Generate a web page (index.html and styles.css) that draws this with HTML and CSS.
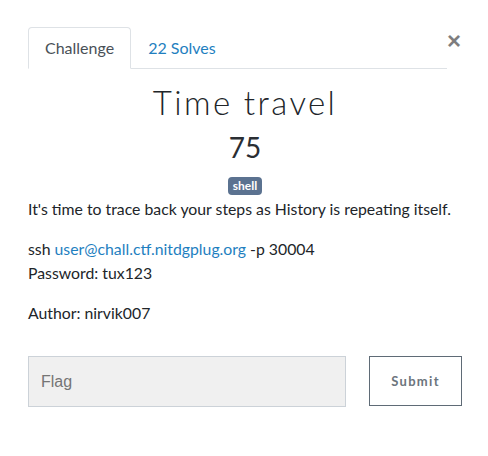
FILE: index.html
```html
<!DOCTYPE html>
<html>
<head>
<meta charset="utf-8">
<link rel="stylesheet" href="styles.css">
</head>
<body>
<div class="modal">
  <div class="head">
    <ul class="tabs">
      <li class="tab active">Challenge</li>
      <li class="tab link">22 Solves</li>
    </ul>
    <span class="close">×</span>
  </div>
  <h3 class="name">Time travel</h3>
  <h4 class="value">75</h4>
  <div class="tags"><span class="badge">shell</span></div>
  <div class="desc">
    <p>It's time to trace back your steps as History is repeating itself.</p>
    <p>ssh <a class="lnk">user@chall.ctf.nitdgplug.org</a> -p 30004<br>Password: tux123</p>
    <p>Author: nirvik007</p>
  </div>
  <div class="submit-row">
    <div class="flag">Flag</div>
    <div class="btn">Submit</div>
  </div>
</div>
</body>
</html>
```

FILE: styles.css
```css
html, body {
  margin: 0;
  background: #fff;
}
body {
  font-family: Lato, "Noto Sans", sans-serif;
  font-size: 16px;
  line-height: 1.5;
  color: #212529;
}
.modal {
  padding: 27px 26px 0 28px;
}
.head {
  display: flex;
  align-items: flex-start;
  padding-right: 1px;
}
.tabs {
  list-style: none;
  margin: 0;
  padding: 0;
  display: flex;
  width: 420px;
  border-bottom: 1px solid #dee2e6;
}
.tab {
  padding: 8px 16px;
  border: 1px solid transparent;
  border-top-left-radius: 4px;
  border-top-right-radius: 4px;
  margin-bottom: -1px;
}
.tab.active {
  color: #495057;
  border-color: #dee2e6 #dee2e6 #fff;
  background: #fff;
}
.tab.link {
  color: #1f7fbf;
}
.close {
  margin-left: auto;
  margin-top: 2px;
  font-size: 24px;
  font-weight: 700;
  line-height: 1;
  color: #000;
  opacity: 0.5;
  font-family: "Liberation Sans", sans-serif;
}
.name {
  margin: 12px 0 0;
  text-align: center;
  font-family: Lato, sans-serif;
  font-weight: 300;
  font-size: 33px;
  line-height: 43px;
  letter-spacing: 2.4px;
  color: #212529;
}
.value {
  margin: 6px 0 0;
  text-align: center;
  font-weight: 400;
  font-size: 28px;
  line-height: 34px;
  color: #2a2e33;
}
.tags {
  text-align: center;
  margin-top: 12px;
  line-height: 1;
}
.badge {
  display: inline-block;
  background: #5b7290;
  color: #fff;
  font-size: 12px;
  font-weight: 700;
  padding: 3px 5px;
  border-radius: 4px;
  line-height: 12px;
}
.desc {
  margin-top: 2px;
  font-size: 15.8px;
  line-height: 24px;
}
.desc p {
  margin: 0 0 16px;
}
.lnk {
  color: #1f7fbf;
}
.submit-row {
  display: flex;
  margin-top: 31px;
  gap: 23px;
}
.flag {
  box-sizing: border-box;
  flex: none;
  width: 318px;
  height: 51px;
  background: #f0f0f0;
  border: 1px solid #ccd2d8;
  padding: 0 12px;
  font-family: "Liberation Sans", Arial, sans-serif;
  font-size: 16px;
  line-height: 49px;
  color: #757575;
}
.btn {
  box-sizing: border-box;
  flex: none;
  width: 93px;
  height: 50px;
  border: 1px solid #5f6b76;
  text-align: center;
  line-height: 48px;
  font-size: 13px;
  font-weight: 700;
  letter-spacing: 1.3px;
  color: #6c757d;
}
```
